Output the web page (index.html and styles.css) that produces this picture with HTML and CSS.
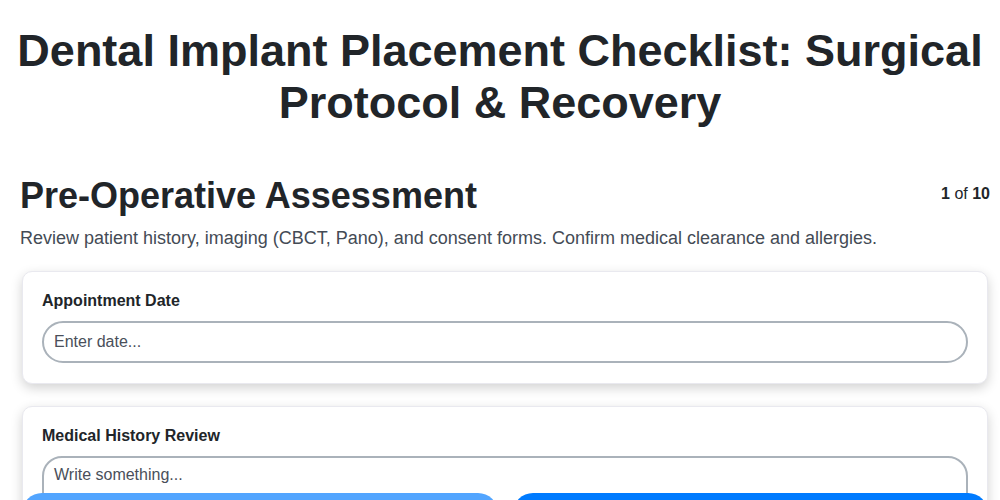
FILE: index.html
```html
<!DOCTYPE html>
<html lang="en">
<head>
<meta charset="utf-8">
<title>Dental Implant Placement Checklist</title>
<link rel="stylesheet" href="styles.css">
</head>
<body>
<main class="page">
  <h1 class="title">Dental Implant Placement Checklist: Surgical Protocol &amp; Recovery</h1>
  <section class="step">
    <header class="step-head">
      <h2 class="step-title">Pre-Operative Assessment</h2>
      <div class="step-count"><b>1</b> of <b>10</b></div>
    </header>
    <p class="step-desc">Review patient history, imaging (CBCT, Pano), and consent forms. Confirm medical clearance and allergies.</p>
    <div class="cards">
      <div class="card">
        <label class="field-label" for="date">Appointment Date</label>
        <input class="field-input" id="date" type="text" placeholder="Enter date...">
      </div>
      <div class="card">
        <label class="field-label" for="hist">Medical History Review</label>
        <textarea class="field-text" id="hist" placeholder="Write something..."></textarea>
      </div>
    </div>
  </section>
</main>
<nav class="nav">
  <button class="btn btn-prev" disabled>Previous</button>
  <button class="btn btn-next">Next</button>
</nav>
</body>
</html>
```
FILE: styles.css
```css
* { box-sizing: border-box; }
html, body { margin: 0; padding: 0; background: #fff; }
body {
  font-family: "Liberation Sans", Arial, sans-serif;
  color: #212529;
}
.page { padding: 20px 10px 120px 10px; }
.title {
  margin: 5px 0 0;
  text-align: center;
  font-size: 45px;
  line-height: 52px;
  font-weight: 700;
}
.step { margin: 47px 0 0 10px; }
.step-head {
  display: flex;
  justify-content: space-between;
  align-items: flex-start;
}
.step-title {
  margin: 0;
  font-size: 36px;
  line-height: 40px;
  font-weight: 700;
}
.step-count {
  font-size: 16px;
  line-height: 20px;
  padding-top: 8px;
  color: #212529;
}
.step-desc {
  margin: 11px 0 22px;
  font-size: 18px;
  line-height: 22px;
  color: #444b55;
}
.cards { display: flex; flex-direction: column; gap: 22px; margin: 0 2px; }
.card {
  background: #fff;
  border: 1px solid #e9e9ef;
  border-radius: 10px;
  box-shadow: 0 4px 12px rgba(0,0,0,0.18);
  padding: 19px 19px 20px;
  display: flex;
  flex-direction: column;
}
.field-label {
  font-size: 16px;
  font-weight: 700;
  line-height: 20px;
  margin-bottom: 10px;
}
.field-input, .field-text {
  font-family: "Liberation Sans", Arial, sans-serif;
  font-size: 16px;
  color: #212529;
  border: 2px solid #aab2ba;
  background: #fff;
  padding: 8px 10px;
  outline: none;
}
.field-input { height: 42px; border-radius: 21px; }
.field-text { height: 100px; border-radius: 20px; resize: none; }
.field-input::placeholder, .field-text::placeholder { color: #4a4f5a; opacity: 1; }
.nav {
  position: fixed;
  left: 22px;
  right: 12px;
  bottom: -40px;
  display: flex;
  gap: 15px;
}
.btn {
  flex: 1;
  height: 47px;
  border: 0;
  border-radius: 20px;
  color: #fff;
  font-family: "Liberation Sans", Arial, sans-serif;
  font-size: 16px;
  font-weight: 700;
  background: #007bff;
  padding-top: 24px;
}
.btn-prev { background: #52a5ff; }
```
